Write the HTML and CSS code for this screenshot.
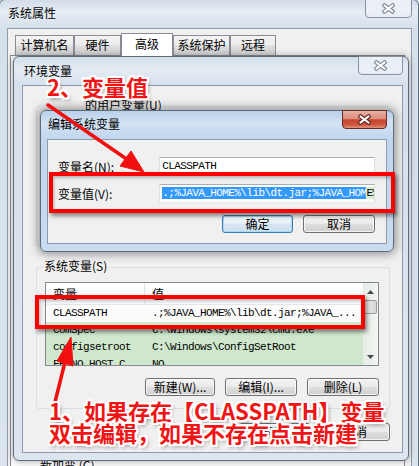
FILE: index.html
```html
<!DOCTYPE html>
<html lang="zh-CN">
<head>
    <meta charset="UTF-8">
    <meta name="viewport" content="width=device-width, initial-scale=1.0">
    <title>编辑系统变量</title>
    <link rel="stylesheet" href="styles.css">
</head>
<body>
    <!-- 系统属性 -->
    <div class="win win-sys">
        <div class="titlebar">
            <span class="title">系统属性</span>
            <span class="close close-wide">
                <svg class="x" viewBox="0 0 13 11" width="13" height="11"><path class="x-edge" d="M2.5 2.5l8 6M10.5 2.5l-8 6"/><path class="x-core" d="M2.5 2.5l8 6M10.5 2.5l-8 6"/></svg>
            </span>
        </div>
        <div class="client">
            <div class="tabs">
                <span class="tab tab-name">计算机名</span>
                <span class="tab tab-hw">硬件</span>
                <span class="tab tab-adv active">高级</span>
                <span class="tab tab-prot">系统保护</span>
                <span class="tab tab-remote">远程</span>
            </div>
            <div class="tabpage">
                <div class="hint">新加变 (C)</div>
            </div>
        </div>
    </div>

    <!-- 环境变量 -->
    <div class="win win-env">
        <div class="titlebar">
            <span class="title">环境变量</span>
            <span class="close">
                <svg class="x" viewBox="0 0 13 11" width="13" height="11"><path class="x-edge" d="M2.5 2.5l8 6M10.5 2.5l-8 6"/><path class="x-core" d="M2.5 2.5l8 6M10.5 2.5l-8 6"/></svg>
            </span>
        </div>
        <div class="client env-body">
            <div class="group group-user">
                <span class="group-label user-label">的用户变量(U)</span>
            </div>
            <div class="group group-sys">
                <span class="group-label">系统变量(S)</span>
                <div class="list">
                    <div class="list-body">
                        <div class="list-head">
                            <span class="col-name">变量</span>
                            <span class="col-val">值</span>
                        </div>
                        <div class="list-row plain">
                            <span class="col-name">CLASSPATH</span>
                            <span class="col-val">.;%JAVA_HOME%\lib\dt.jar;%JAVA_...</span>
                        </div>
                        <div class="list-row">
                            <span class="col-name">ComSpec</span>
                            <span class="col-val">C:\Windows\system32\cmd.exe</span>
                        </div>
                        <div class="list-row">
                            <span class="col-name">configsetroot</span>
                            <span class="col-val">C:\Windows\ConfigSetRoot</span>
                        </div>
                        <div class="list-row">
                            <span class="col-name">FP_NO_HOST_C</span>
                            <span class="col-val">NO</span>
                        </div>
                    </div>
                    <div class="scroll">
                        <div class="scroll-btn"><svg viewBox="0 0 7 4" width="7" height="4"><polygon points="3.5,0 7,4 0,4"/></svg></div>
                        <div class="scroll-thumb"></div>
                        <div class="scroll-track"></div>
                        <div class="scroll-btn"><svg viewBox="0 0 7 4" width="7" height="4"><polygon points="0,0 7,0 3.5,4"/></svg></div>
                    </div>
                </div>
                <div class="btn-row">
                    <span class="btn w70">新建(W)...</span>
                    <span class="btn w72">编辑(I)...</span>
                    <span class="btn w72">删除(L)</span>
                </div>
            </div>
            <div class="btn-row footer">
                <span class="btn w71">确定</span>
                <span class="btn w70">取消</span>
            </div>
        </div>
    </div>

    <!-- 编辑系统变量 -->
    <div class="win win-edit">
        <div class="titlebar">
            <span class="title">编辑系统变量</span>
            <span class="close close-red">
                <svg class="x" viewBox="0 0 13 11" width="13" height="11"><path class="x-edge" d="M2.5 2.5l8 6M10.5 2.5l-8 6"/><path class="x-core" d="M2.5 2.5l8 6M10.5 2.5l-8 6"/></svg>
            </span>
        </div>
        <div class="client edit-body">
            <div class="field-row">
                <span class="field-label">变量名(N):</span>
                <span class="field">CLASSPATH</span>
            </div>
            <div class="field-row">
                <span class="field-label">变量值(V):</span>
                <span class="field"><span class="sel">.;%JAVA_HOME%\lib\dt.jar;%JAVA_HOM</span><span class="caret-char">E%</span></span>
            </div>
            <div class="btn-row">
                <span class="btn btn-default w71">确定</span>
                <span class="btn w72">取消</span>
            </div>
        </div>
    </div>

    <!-- 标注 -->
    <div class="mark mark-value"></div>
    <div class="mark mark-row"></div>

    <svg class="arrows" viewBox="0 0 419 466" width="419" height="466">
        <line x1="48" y1="105" x2="128" y2="160"/>
        <polygon points="144,172 120,166 131,151"/>
        <line x1="55" y1="402" x2="65" y2="362"/>
        <polygon points="71,337 57,361 73,366"/>
    </svg>

    <div class="note note-value">2、变量值</div>
    <div class="note note-tip">1、如果存在【CLASSPATH】变量<br>双击编辑，如果不存在点击新建</div>
</body>
</html>
```

FILE: styles.css
```css
* {
    margin: 0;
    padding: 0;
    box-sizing: border-box;
}

body {
    width: 419px;
    height: 466px;
    position: relative;
    overflow: hidden;
    background: #d9e3ee;
    font-family: "Noto Sans CJK SC", "Liberation Sans", sans-serif;
    font-size: 12px;
    line-height: 14px;
    color: #000;
}

/* windows */
.win {
    position: absolute;
    display: flex;
    flex-direction: column;
    border: 1px solid #5d6b7b;
    border-radius: 6px;
}

.win-sys {
    left: -1px;
    top: -1px;
    width: 420px;
    height: 500px;
    padding: 0 6px 0 7px;
    background: linear-gradient(180deg, #d2dde9 0, #e6edf4 12px, #d5e0eb 28px, #dce5ee 100%);
}

.win-env {
    left: 13px;
    top: 56px;
    width: 396px;
    height: 405px;
    padding: 0 5px 7px 8px;
    background: linear-gradient(180deg, #d3deea 0, #e4ebf3 12px, #d7e1ec 28px, #dde6ef 100%);
    box-shadow: 0 0 7px rgba(0, 0, 0, 0.35);
}

.win-edit {
    left: 40px;
    top: 110px;
    width: 354px;
    height: 142px;
    padding: 0 6px 7px 6px;
    background: linear-gradient(180deg, #b9d0ea 0, #d3e2f3 12px, #c0d6ee 28px, #c9dcf0 100%);
    box-shadow: 0 0 10px 2px rgba(0, 0, 0, 0.4);
}

.titlebar {
    height: 28px;
    flex-shrink: 0;
    display: flex;
    justify-content: space-between;
    align-items: flex-start;
}

.title {
    margin-top: 6px;
    padding-left: 1px;
}

.win-env .title {
    margin-top: 7px;
    padding-left: 2px;
}

.close {
    width: 45px;
    height: 19px;
    margin-top: -1px;
    display: flex;
    align-items: center;
    justify-content: center;
    border: 1px solid #8593a3;
    border-radius: 0 0 4px 4px;
    background: linear-gradient(180deg, rgba(255, 255, 255, 0.55), rgba(255, 255, 255, 0.15));
}

.close-wide {
    width: 47px;
}

.close-red {
    border-color: #6b2b23;
    background: linear-gradient(180deg, #eab0a2 0%, #dc8f7c 45%, #c8452f 52%, #cd563f 80%, #e2917c 100%);
}

.x-edge {
    fill: none;
    stroke: #7f8b99;
    stroke-width: 4.2;
    stroke-linecap: square;
}

.x-core {
    fill: none;
    stroke: #fff;
    stroke-width: 2;
    stroke-linecap: square;
}

.close-red .x-edge {
    stroke: #5a231c;
}

.client {
    flex: 1;
    display: flex;
    flex-direction: column;
    background: #f0f0f0;
    border: 1px solid #8d9bab;
}

/* 系统属性 tabs */
.tabs {
    height: 27px;
    flex-shrink: 0;
    display: flex;
    align-items: flex-end;
    padding: 4px 0 0 7px;
}

.tab {
    height: 20px;
    margin-bottom: 1px;
    border: 1px solid #898c95;
    border-bottom: none;
    text-align: center;
    line-height: 18px;
    background: linear-gradient(180deg, #f4f4f4 0%, #ebebeb 48%, #dddddd 52%, #d2d2d2 100%);
}

.tab.active {
    height: 23px;
    margin-bottom: 0;
    position: relative;
    z-index: 1;
    background: #fff;
    line-height: 20px;
}

.tab-name { width: 59px; }
.tab-hw { width: 47px; }
.tab-adv { width: 52px; }
.tab-prot { width: 57px; }
.tab-remote { width: 46px; }

.tabpage {
    flex: 1;
    margin: -1px 6px 0 2px;
    border: 1px solid #898c95;
    background: #fbfbfb;
}

.hint {
    margin-top: 402px;
    padding-left: 29px;
}

/* 环境变量 */
.env-body {
    padding: 0 12px 0 13px;
}

.group {
    display: flex;
    flex-direction: column;
    align-items: flex-start;
    border: 1px solid #d5dfe5;
    border-radius: 3px;
}

.group-user {
    margin-top: 20px;
    height: 140px;
}

.group-sys {
    margin-top: 21px;
    padding: 0 10px 12px 8px;
}

.group-label {
    margin: -8px 0 0 -2px;
    padding: 0 1px;
    line-height: 12px;
    background: #f0f0f0;
}

.user-label {
    margin-left: 3px;
    padding-left: 45px;
}

.list {
    width: 334px;
    height: 84px;
    margin-top: 10px;
    display: flex;
    border: 1px solid #828790;
    background: #fff;
}

.list-body {
    flex: 1;
    overflow: hidden;
    font-family: "Liberation Mono", monospace;
    font-size: 11px;
    letter-spacing: -0.6px;
}

.list-head,
.list-row {
    display: grid;
    grid-template-columns: 99px 1fr;
    white-space: nowrap;
}

.list-head {
    height: 22px;
    line-height: 21px;
    border-bottom: 1px solid #e5e5e5;
    background: linear-gradient(180deg, #fff, #f6f7f8);
    font-family: "Noto Sans CJK SC", sans-serif;
    font-size: 12px;
    letter-spacing: 0;
}

.list-head .col-name {
    border-right: 1px solid #e3e3e3;
}

.list-row {
    height: 17px;
    line-height: 17px;
    background: #cfe8cd;
}

.list-row.plain {
    background: #fcfcfc;
}

.col-name,
.col-val {
    padding-left: 7px;
    overflow: hidden;
}

.scroll {
    width: 15px;
    display: flex;
    flex-direction: column;
    background: linear-gradient(90deg, #e5ebe5, #f3f6f3);
}

.scroll-btn {
    height: 17px;
    display: flex;
    align-items: center;
    justify-content: center;
}

.scroll-btn svg {
    fill: #4a4a4a;
}

.scroll-thumb {
    height: 14px;
    margin: 0 1px;
    border: 1px solid #9c9c9c;
    border-radius: 2px;
    background: linear-gradient(90deg, #f0f0f0, #d4d4d4);
}

.scroll-track {
    flex: 1;
}

.btn-row {
    align-self: stretch;
    display: flex;
    justify-content: flex-end;
    gap: 10px;
    margin-top: 12px;
}

.footer {
    margin-top: 14px;
}

.btn {
    height: 18px;
    display: flex;
    align-items: center;
    justify-content: center;
    border: 1px solid #707070;
    border-radius: 3px;
    background: linear-gradient(180deg, #f3f3f3 0%, #ececec 45%, #dedede 52%, #d0d0d0 100%);
    box-shadow: inset 0 0 0 1px rgba(255, 255, 255, 0.7);
    line-height: 16px;
}

.btn-default {
    border-color: #3c7fb1;
    box-shadow: inset 0 0 0 1px #a7d9f5;
    background: linear-gradient(180deg, #f2f8fc 0%, #e6f0f7 45%, #d7e6f1 52%, #cfe0ee 100%);
}

.w70 { width: 70px; }
.w71 { width: 71px; }
.w72 { width: 72px; }

/* 编辑系统变量 */
.edit-body {
    padding: 17px 11px 0 10px;
}

.field-row {
    height: 19px;
    display: flex;
    align-items: center;
}

.field-row + .field-row {
    margin-top: 8px;
}

.field-label {
    width: 102px;
}

.field {
    width: 217px;
    height: 19px;
    padding-left: 2px;
    overflow: hidden;
    white-space: nowrap;
    border: 1px solid;
    border-color: #abadb3 #dbdfe6 #e3e9ef #e2e3ea;
    background: #fff;
    font-family: "Liberation Mono", monospace;
    font-size: 11px;
    letter-spacing: -0.6px;
    line-height: 17px;
}

.sel {
    background: #3399ff;
    color: #fff;
}

.caret-char {
    background: #d6eed6;
}

/* annotations */
.mark {
    position: absolute;
    border: 4px solid #ff0000;
    box-shadow: 2px 3px 4px rgba(0, 0, 0, 0.45), inset 1px 2px 3px rgba(0, 0, 0, 0.25);
}

.mark-value {
    left: 49px;
    top: 172px;
    width: 346px;
    height: 41px;
}

.mark-row {
    left: 35px;
    top: 295px;
    width: 330px;
    height: 34px;
}

.arrows {
    position: absolute;
    left: 0;
    top: 0;
}

.arrows line {
    stroke: #f20f0f;
    stroke-width: 3.5;
    stroke-linecap: round;
}

.arrows polygon {
    fill: #f20f0f;
    stroke: #f20f0f;
    stroke-width: 1;
    stroke-linejoin: round;
}

.note {
    position: absolute;
    font-family: "Noto Sans CJK SC", sans-serif;
    font-weight: 700;
    font-size: 22px;
    line-height: 22px;
    color: #f01414;
    white-space: nowrap;
    text-shadow:
        -2px -2px 0 #fff, 2px -2px 0 #fff, -2px 2px 0 #fff, 2px 2px 0 #fff,
        0 -2px 0 #fff, 0 2px 0 #fff, -2px 0 0 #fff, 2px 0 0 #fff,
        2px 3px 4px rgba(0, 0, 0, 0.5);
}

.note-value {
    left: 47px;
    top: 75px;
}

.note-tip {
    left: 49px;
    top: 399px;
}
```
